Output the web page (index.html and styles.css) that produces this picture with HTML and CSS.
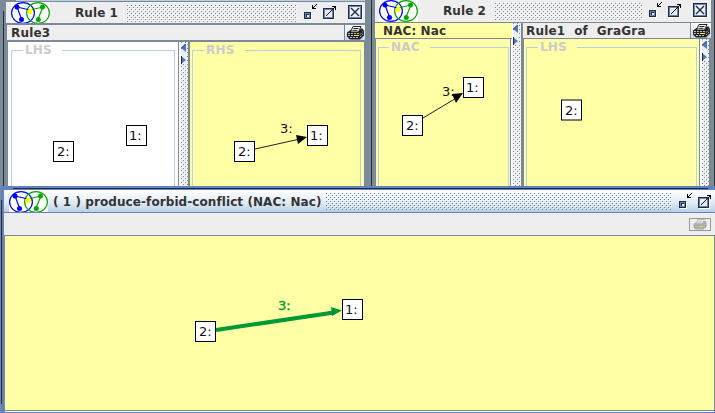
FILE: index.html
```html
<!DOCTYPE html>
<html lang="en">
<head>
<meta charset="utf-8">
<title>Rule conflicts</title>
<link rel="stylesheet" href="styles.css">
</head>
<body>
<svg class="defs" width="0" height="0" aria-hidden="true">
  <defs>
    <pattern id="dots" width="4" height="4" patternUnits="userSpaceOnUse">
      <path class="dot-light" d="M1 1h1v1h-1zM3 3h1v1h-1z"/>
      <path class="dot-dark" d="M0 0h1v1h-1zM2 2h1v1h-1z"/>
    </pattern>
    <pattern id="dots-active" width="4" height="4" patternUnits="userSpaceOnUse">
      <path class="dot-light" d="M1 1h1v1h-1zM3 3h1v1h-1z"/>
      <path class="dot-blue" d="M0 0h1v1h-1zM2 2h1v1h-1z"/>
    </pattern>
    <symbol id="logo" viewBox="0 0 39 22">
      <rect width="39" height="22" fill="#fff"/>
      <g fill="none" stroke-width="1.200">
        <ellipse cx="12" cy="11" rx="11.400" ry="10.400" stroke="#00f"/>
        <ellipse cx="27" cy="11" rx="11.400" ry="10.400" stroke="#00a800"/>
        <path d="M6 5l4.500 12M6 5l13 3" stroke="#00f"/>
        <path d="M32 5l-5 12M32 5l-13 3" stroke="#00a800"/>
      </g>
      <circle cx="6" cy="5" r="2.500" fill="#00f"/><circle cx="10.500" cy="17.500" r="2.500" fill="#00f"/>
      <circle cx="31.500" cy="5" r="2.500" fill="#00a800"/><circle cx="27.300" cy="17.500" r="2.500" fill="#00a800"/>
      <circle cx="19.200" cy="9.300" r="2.600" fill="#ff0"/>
    </symbol>
    <symbol id="min" viewBox="0 0 14 16">
      <g shape-rendering="crispEdges"><path d="M1 9h7v7H1z" fill="#fff"/><path d="M0 8h7v7H0z" fill="#222b40"/><path d="M1 9h5v5H1z" fill="#6382bf"/><path d="M2 10h3v3H2z" fill="#222b40"/><path d="M3 11h2v2H3z" fill="#fff"/>
      <path d="M8 1h1v3h3v1H8zM9 3h1v1H9zM10 2h1v1h-1zM11 1h1v1h-1zM12 0h1v1h-1z" fill="#000"/></g>
    </symbol>
    <symbol id="max" viewBox="0 0 14 16">
      <g shape-rendering="crispEdges"><path d="M1 5h11v11H1z" fill="#fff"/><path d="M0 4h11v11H0z" fill="#222b40"/><path d="M1 5h9v9H1z" fill="#6382bf"/><path d="M2 6h7v7H2z" fill="#e8edf5"/>
      <path d="M9 2h4v4h-1V3H9zM3 11h1v1H3zM4 10h1v1H4zM5 9h1v1H5zM6 8h1v1H6zM7 7h1v1H7zM8 6h1v1H8zM9 5h1v1H9zM10 4h1v1h-1zM11 3h1v1h-1z" fill="#000"/></g>
    </symbol>
    <symbol id="close" viewBox="0 0 15 15">
      <g shape-rendering="crispEdges"><path d="M1 1h14v14H1z" fill="#fff"/><path d="M0 0h14v14H0z" fill="#222b40"/><path d="M1 1h12v12H1z" fill="#6382bf"/><path d="M2 2h10v10H2z" fill="#eef1f7"/></g>
      <path d="M3 3l8 8M11 3l-8 8" stroke="#222b40" stroke-width="1.400"/>
    </symbol>
    <symbol id="printer" viewBox="0 0 17 14">
      <path d="M0 6.500L3.500 4h9L15 2l2 3v4.500L13 13.500H3l-3-3z" fill="currentColor"/>
      <path class="paper" d="M6 .5h8l-2.500 5.500H3.500z"/>
      <path d="M6.500 2.500h5M5.500 4.300h5" stroke="currentColor" fill="none"/>
      <path class="feed" d="M1 7.500h11M1 9.500h6M3 11.500h9M13 8.500l3-3M13 11l3-3"/>
      <path class="led" d="M7 9.500h5"/>
    </symbol>
    <symbol id="arrows" viewBox="0 0 6 20">
      <rect width="6" height="20" fill="#eee"/>
      <path d="M5 0v8L0 4z" fill="#4f78c4"/><path d="M4 0h1L1 4v1L0 4z" fill="#222b40"/>
      <path d="M0 12v8l5-4z" fill="#4f78c4"/><path d="M0 12h1v8H0z" fill="#222b40"/>
    </symbol>
  </defs>
</svg>
<main class="desktop">

  <section class="window rule-one">
    <header class="titlebar">
      <svg class="logo"><use href="#logo"/></svg>
      <h1>Rule 1</h1>
      <svg class="grip"><rect width="100%" height="100%" fill="url(#dots)"/></svg>
      <svg class="min"><use href="#min"/></svg><svg class="max"><use href="#max"/></svg><svg class="close"><use href="#close"/></svg>
    </header>
    <div class="rulebar"><span>Rule3</span><button class="print" aria-label="Print"><svg><use href="#printer"/></svg></button></div>
    <div class="split">
      <div class="graph plain">
        <fieldset><legend>LHS</legend></fieldset>
        <svg class="canvas" viewBox="9 42 168 144">
          <g class="node"><rect x="53.500" y="141.500" width="20" height="20"/><text x="57" y="156">2:</text>
          <rect x="126.500" y="125.500" width="20" height="20"/><text x="129" y="140">1:</text></g>
        </svg>
      </div>
      <div class="divider"><svg class="texture"><rect width="100%" height="100%" fill="url(#dots)"/></svg><svg class="arrows"><use href="#arrows"/></svg></div>
      <div class="graph">
        <fieldset><legend>RHS</legend></fieldset>
        <svg class="canvas" viewBox="190 42 173 144">
          <path class="edge" d="M255 149L300 139"/><path d="M296 135l11 2-9 7z"/>
          <text x="280" y="133">3:</text>
          <g class="node"><rect x="234.500" y="141.500" width="20" height="20"/><text x="238" y="156">2:</text>
          <rect x="307.500" y="125.500" width="20" height="20"/><text x="310" y="140">1:</text></g>
        </svg>
      </div>
    </div>
  </section>

  <section class="window rule-two">
    <header class="titlebar">
      <svg class="logo"><use href="#logo"/></svg>
      <h1>Rule 2</h1>
      <svg class="grip"><rect width="100%" height="100%" fill="url(#dots)"/></svg>
      <svg class="min"><use href="#min"/></svg><svg class="max"><use href="#max"/></svg><svg class="close"><use href="#close"/></svg>
    </header>
    <div class="columns">
      <div class="nac">
        <div class="naclabel">NAC: Nac</div>
        <div class="graph">
          <fieldset><legend>NAC</legend></fieldset>
          <svg class="canvas" viewBox="377 39 133 147">
            <path class="edge" d="M423 118L458 97"/><path d="M452 94l11-1-7 10z"/>
            <text x="442" y="96">3:</text>
            <g class="node"><rect x="402.500" y="115.500" width="20" height="20"/><text x="406" y="130">2:</text>
            <rect x="463.500" y="77.500" width="20" height="20"/><text x="466" y="92">1:</text></g>
          </svg>
        </div>
      </div>
      <div class="divider"><svg class="texture"><rect width="100%" height="100%" fill="url(#dots)"/></svg><svg class="arrows"><use href="#arrows"/></svg></div>
      <div class="rule">
        <div class="rulebar"><span>Rule1  of  GraGra</span><button class="print" aria-label="Print"><svg><use href="#printer"/></svg></button></div>
        <div class="split">
          <div class="graph">
            <fieldset><legend>LHS</legend></fieldset>
            <svg class="canvas" viewBox="524 40 174 146">
              <g class="node"><rect x="561.500" y="100.500" width="20" height="20"/><text x="565" y="115">2:</text></g>
            </svg>
          </div>
          <div class="divider"><svg class="texture"><rect width="100%" height="100%" fill="url(#dots)"/></svg><svg class="arrows"><use href="#arrows"/></svg></div>
        </div>
      </div>
    </div>
  </section>

  <section class="window conflict">
    <header class="titlebar">
      <svg class="logo"><use href="#logo"/></svg>
      <h1>( 1 ) produce-forbid-conflict (NAC: Nac)</h1>
      <svg class="grip"><rect width="100%" height="100%" fill="url(#dots-active)"/></svg>
      <svg class="min"><use href="#min"/></svg><svg class="max"><use href="#max"/></svg>
    </header>
    <div class="toolbar"><button class="print disabled" aria-label="Print" disabled><svg><use href="#printer"/></svg></button></div>
    <div class="graph">
      <svg class="canvas" viewBox="5 236 709 174">
        <path class="conflict-edge" d="M216 330L334 312.500"/><path class="conflict-tip" d="M331 307l11 3.500-10 5.500z"/>
        <text class="conflict-label" x="278" y="310">3:</text>
        <g class="node"><rect x="195.500" y="321.500" width="20" height="20"/><text x="199" y="336">2:</text>
        <rect x="342.500" y="299.500" width="20" height="20"/><text x="345" y="314">1:</text></g>
      </svg>
    </div>
  </section>
</main>
</body>
</html>
```
FILE: styles.css
```css
* { box-sizing: border-box; }
body { margin: 0; font-family: "DejaVu Sans", sans-serif; font-size: 13px; color: #333; }
svg { display: block; }
.defs { position: absolute; }
.desktop { position: relative; width: 715px; height: 413px; overflow: hidden; background: #7a8a99; }

/* Internal windows, placed freely on the desktop */
.window { position: absolute; display: flex; flex-direction: column; background: #7a8a99; }
.rule-one { left: 0; top: 0; width: 372px; height: 186px; padding: 2px 6px 0; border-right: 1px solid #333; }
.rule-one::before { content: ""; position: absolute; left: 16px; right: 6px; top: 0; height: 1px; background: #b8cfe5; }
.rule-one::after { content: ""; position: absolute; left: 3px; top: 11px; bottom: 0; width: 1px; background: #222b33; }
.rule-two { left: 372px; top: 0; width: 343px; height: 186px; padding: 0 3px 0 3px; border-right: 1px solid #333; }
.rule-two::before { content: ""; position: absolute; left: -1px; top: 9px; bottom: 0; width: 1px; background: #222b33; }
.conflict { left: 1px; top: 186px; width: 714px; height: 227px; padding: 4px 0 0 3px; background: #6382bf; border-bottom: 1px solid #6382bf; }
.conflict::before { content: ""; position: absolute; left: 12px; right: 7px; top: 2px; height: 1px; background: #222b40; }
.conflict::after { content: ""; position: absolute; left: 0; top: 14px; bottom: 8px; width: 1px; background: #222b33; }

.titlebar { display: flex; flex: none; align-items: flex-start; height: 21px; background: #eee; overflow: hidden; }
.titlebar svg { flex: none; }
.logo { width: 39px; height: 22px; }
.titlebar h1 { margin: 0; font-size: 12px; letter-spacing: .08px; line-height: 23px; white-space: pre; }
.grip { height: 17px; margin-top: 3px; }
.dot-light { fill: #fff; shape-rendering: crispEdges; }
.dot-dark { fill: #7a8a99; shape-rendering: crispEdges; }
.dot-blue { fill: #6382bf; shape-rendering: crispEdges; }
.min, .max { width: 14px; height: 16px; margin-top: 2px; }
.close { width: 15px; height: 15px; margin-top: 3px; }

.rule-one .titlebar { padding-left: 5px; }
.rule-one h1 { margin-left: 25px; width: 52px; }
.rule-one .grip { width: 170px; }
.rule-one .min { margin-left: 7px; }
.rule-one .max { margin-left: 5px; }
.rule-one .close { margin-left: 11px; }
.rule-two .titlebar { padding-left: 4px; height: 22px; }
.rule-two h1 { margin-left: 25px; width: 52px; }
.rule-two .grip { width: 148px; }
.rule-two .min { margin-left: 6px; }
.rule-two .max { margin-left: 5px; }
.rule-two .close { margin-left: 11px; }
.conflict .titlebar { height: 22px; padding-left: 5px; background: linear-gradient(#fff, #dfeaf3 60%, #b8cfe5); }
.conflict .logo { margin-top: 1px; }
.conflict h1 { margin-left: 5px; width: 273px; line-height: 25px; }
.conflict .grip { flex: 1; }
.conflict .min { margin: 3px 5px 0 7px; }
.conflict .max { margin: 3px 3px 0 0; }

.rulebar { display: flex; flex: none; align-items: stretch; justify-content: space-between; margin: 2px 0 0 1px; height: 15px; padding-left: 4px; background: #eee; font: bold 12px/17px "DejaVu Sans", sans-serif; letter-spacing: .2px; white-space: pre; }
.print { flex: none; display: block; width: 21px; height: 15px; padding: 0 2px; border: 0 solid #7a8a99; border-left-width: 1px; background: linear-gradient(#fff, #c5d7e9); color: #222; }
.print svg { width: 17px; height: 14px; }
.paper { fill: #fff; stroke: currentColor; }
.feed { fill: none; stroke: #bbb; stroke-dasharray: 2 1; }
.led { fill: none; stroke: #ee3; }
.print.disabled { width: 22px; height: 13px; border: 1px solid #999; background: #eee; color: #aaa; }
.print.disabled svg { width: 16px; height: 11px; }
.disabled .paper { fill: #ddd; }
.disabled .feed, .disabled .led { stroke: #ccc; }

.split { display: flex; flex: 1; margin-top: 2px; min-height: 0; }
.graph { position: relative; overflow: hidden; background: #ffffa5; }
.graph.plain { background: #fff; }
.canvas { width: 100%; height: 100%; }
.graph fieldset { position: absolute; left: 2px; right: 2px; top: 0; height: 160px; margin: 0; padding: 0 0 0 11px; border: 1px solid #b8cfe5; border-bottom: 0; min-width: 0; }
legend { padding: 0 10px 0 2px; color: #ccc; font: bold 12px/15px "DejaVu Sans", sans-serif; letter-spacing: .2px; }
.divider { position: relative; flex: none; overflow: hidden; background: #eee; }
.texture { width: 100%; height: 100%; }
.arrows { position: absolute; left: 0; top: 2px; width: 6px; height: 20px; }
.rule-one .split { margin-left: 1px; }
.rule-one .graph { flex: none; width: 175px; border-right: 1px solid #7a8a99; }
.rule-one .plain { width: 171px; margin-left: 1px; }
.rule-one .divider { width: 9px; margin-right: 2px; border-left: 2px solid #fff; }
.rule-one .canvas { width: 173px; }
.rule-one .plain .canvas { width: 168px; margin-left: 1px; }
.rule-one .graph fieldset { right: 3px; top: 1px; }
.rule-one .plain fieldset { left: 3px; }

.columns { display: flex; flex: 1; min-height: 0; margin-top: 1px; }
.nac { flex: none; display: flex; flex-direction: column; width: 137px; }
.naclabel { flex: none; height: 15px; padding-left: 8px; margin-bottom: 1px; background: #ffffa5; font: bold 12px/17px "DejaVu Sans", sans-serif; letter-spacing: .1px; }
.nac .graph { flex: 1; margin-left: 1px; border-right: 1px solid #fff; }
.nac .canvas { width: 133px; margin-left: 1px; }
.nac .graph fieldset { left: 2px; right: 2px; top: 1px; padding-left: 10px; }
.nac .graph::after { content: ""; position: absolute; right: 0; top: 0; bottom: 0; width: 1px; background: #7a8a99; }
.nac + .divider { width: 9px; margin-right: 2px; border-left: 1px solid #fff; }
.rule { flex: 1; display: flex; flex-direction: column; min-width: 0; }
.rule .rulebar { margin: 0; padding-left: 3px; }
.rule .split { margin-top: 1px; }
.rule .graph { flex: 1; margin-left: 1px; border-right: 1px solid #7a8a99; }
.rule .graph fieldset { top: 1px; }
.rule .canvas { width: 174px; }
.rule .divider { width: 9px; border-left: 2px solid #fff; margin-right: 2px; }

.toolbar { flex: none; display: flex; justify-content: flex-end; height: 22px; margin-top: 1px; padding: 5px 4px 0 0; background: #eee; }
.conflict .graph { flex: 1; margin: 1px 1px 0 1px; border-bottom: 1px solid #fff; box-shadow: -1px -1px #7a8a99, 1px 0 #7a8a99; }
.conflict .graph .canvas { width: 709px; height: 174px; }
.conflict .graph::after { content: ""; position: absolute; left: 0; right: 0; bottom: 0; height: 1px; background: #7a8a99; }

.canvas text { font: 13px "DejaVu Sans", sans-serif; fill: #111; }
.node rect { fill: #fff; stroke: #000; }
.edge { stroke: #222; stroke-width: 1; }
.conflict-edge { stroke: #009936; stroke-width: 4; }
.conflict-tip { fill: #009936; }
.canvas .conflict-label { font: 13px "DejaVu Sans", sans-serif; fill: #009936; stroke: #009936; stroke-width: .4; }
```
